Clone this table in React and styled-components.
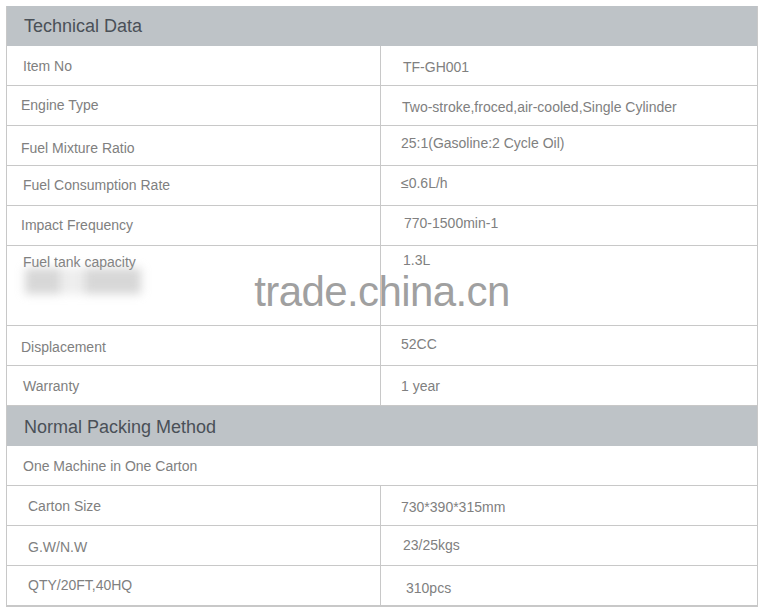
import styled, { createGlobalStyle } from "styled-components";

const GlobalStyle = createGlobalStyle`
	body {
		margin: 0;
		background: #fff;
		font-family: "Liberation Sans", Arial, sans-serif;
	}
`;

const Page = styled.div`
	padding: 6px 10px 5px 6px;
`;

const Table = styled.div`
	position: relative;
	border: 1px solid #c8c8c8;
	border-top: none;
`;

const SectionHead = styled.div`
	height: 40px;
	background: #bec3c7;
	display: flex;
	align-items: center;
	padding-left: 17px;
	padding-top: ${(props) => props.$dy || 0}px;
	box-sizing: border-box;
	font-size: 18px;
	color: #4a5057;
`;

const Row = styled.div`
	display: grid;
	grid-template-columns: ${(props) => (props.$full ? "1fr" : "373px 1fr")};
	height: ${(props) => props.$h || 40}px;
	border-bottom: 1px solid #c8c8c8;
	box-sizing: border-box;
	&:last-child {
		border-bottom: none;
	}
`;

const Cell = styled.div`
	display: flex;
	align-items: ${(props) => (props.$top ? "flex-start" : "center")};
	box-sizing: border-box;
	padding-left: ${(props) => props.$x}px;
	padding-top: ${(props) => (props.$dy > 0 ? props.$dy * 2 : 0)}px;
	padding-bottom: ${(props) => (props.$dy < 0 ? -props.$dy * 2 : 0)}px;
	font-size: 14px;
	color: #808080;
	& + & {
		border-left: 1px solid #c8c8c8;
	}
`;

const Watermark = styled.div`
	position: absolute;
	left: 0;
	right: 0;
	top: 265px;
	text-align: center;
	font-family: "Liberation Sans", Arial, sans-serif;
	font-size: 42px;
	line-height: 1;
	color: #a0a0a0;
	letter-spacing: -0.6px;
	pointer-events: none;
`;

const Smudge = styled.div`
	position: absolute;
	left: 18px;
	top: 262px;
	width: 116px;
	height: 26px;
	background: linear-gradient(90deg,
		rgba(175,175,175,0.5) 0 30%,
		rgba(205,205,205,0.35) 30% 52%,
		rgba(175,175,175,0.5) 52% 100%);
	filter: blur(5px);
	pointer-events: none;
`;

const technical = [
	{ label: "Item No", value: "TF-GH001", lx: 16, vx: 22, ld: 0, vd: 1 },
	{ label: "Engine Type", value: "Two-stroke,froced,air-cooled,Single Cylinder", lx: 14, vx: 21, ld: -1, vd: 1 },
	{ label: "Fuel Mixture Ratio", value: "25:1(Gasoline:2 Cycle Oil)", lx: 14, vx: 20, ld: 2, vd: -3 },
	{ label: "Fuel Consumption Rate", value: "≤0.6L/h", lx: 16, vx: 20, ld: -1, vd: -3 },
	{ label: "Impact Frequency", value: "770-1500min-1", lx: 14, vx: 23, ld: -1, vd: -3 },
	{ label: "Fuel tank capacity", value: "1.3L", lx: 16, vx: 22, ld: 0, vd: 0, h: 80, top: true },
	{ label: "Displacement", value: "52CC", lx: 14, vx: 20, ld: 1, vd: -2 },
	{ label: "Warranty", value: "1 year", lx: 16, vx: 20, ld: 0, vd: 0 },
];

const packing = [
	{ label: "Carton Size", value: "730*390*315mm", lx: 21, vx: 20, ld: 0, vd: 1 },
	{ label: "G.W/N.W", value: "23/25kgs", lx: 21, vx: 22, ld: 1, vd: -1 },
	{ label: "QTY/20FT,40HQ", value: "310pcs", lx: 21, vx: 25, ld: -1, vd: 2 },
];

function DataRow({ item }) {
	return (
		<Row $h={item.h}>
			<Cell $x={item.lx} $dy={item.top ? 4 : item.ld} $top={item.top}>{item.label}</Cell>
			<Cell $x={item.vx} $dy={item.top ? 3 : item.vd} $top={item.top}>{item.value}</Cell>
		</Row>
	);
}

export default function App() {
	return <>
		<GlobalStyle />
		<Page>
			<Table>
				<SectionHead>Technical Data</SectionHead>
				{technical.map((item) => <DataRow key={item.label} item={item} />)}
				<SectionHead $dy={2}>Normal Packing Method</SectionHead>
				<Row $full>
					<Cell $x={16} $dy={0}>One Machine in One Carton</Cell>
				</Row>
				{packing.map((item) => <DataRow key={item.label} item={item} />)}
				<Smudge />
				<Watermark>trade.china.cn</Watermark>
			</Table>
		</Page>
	</>;
}
